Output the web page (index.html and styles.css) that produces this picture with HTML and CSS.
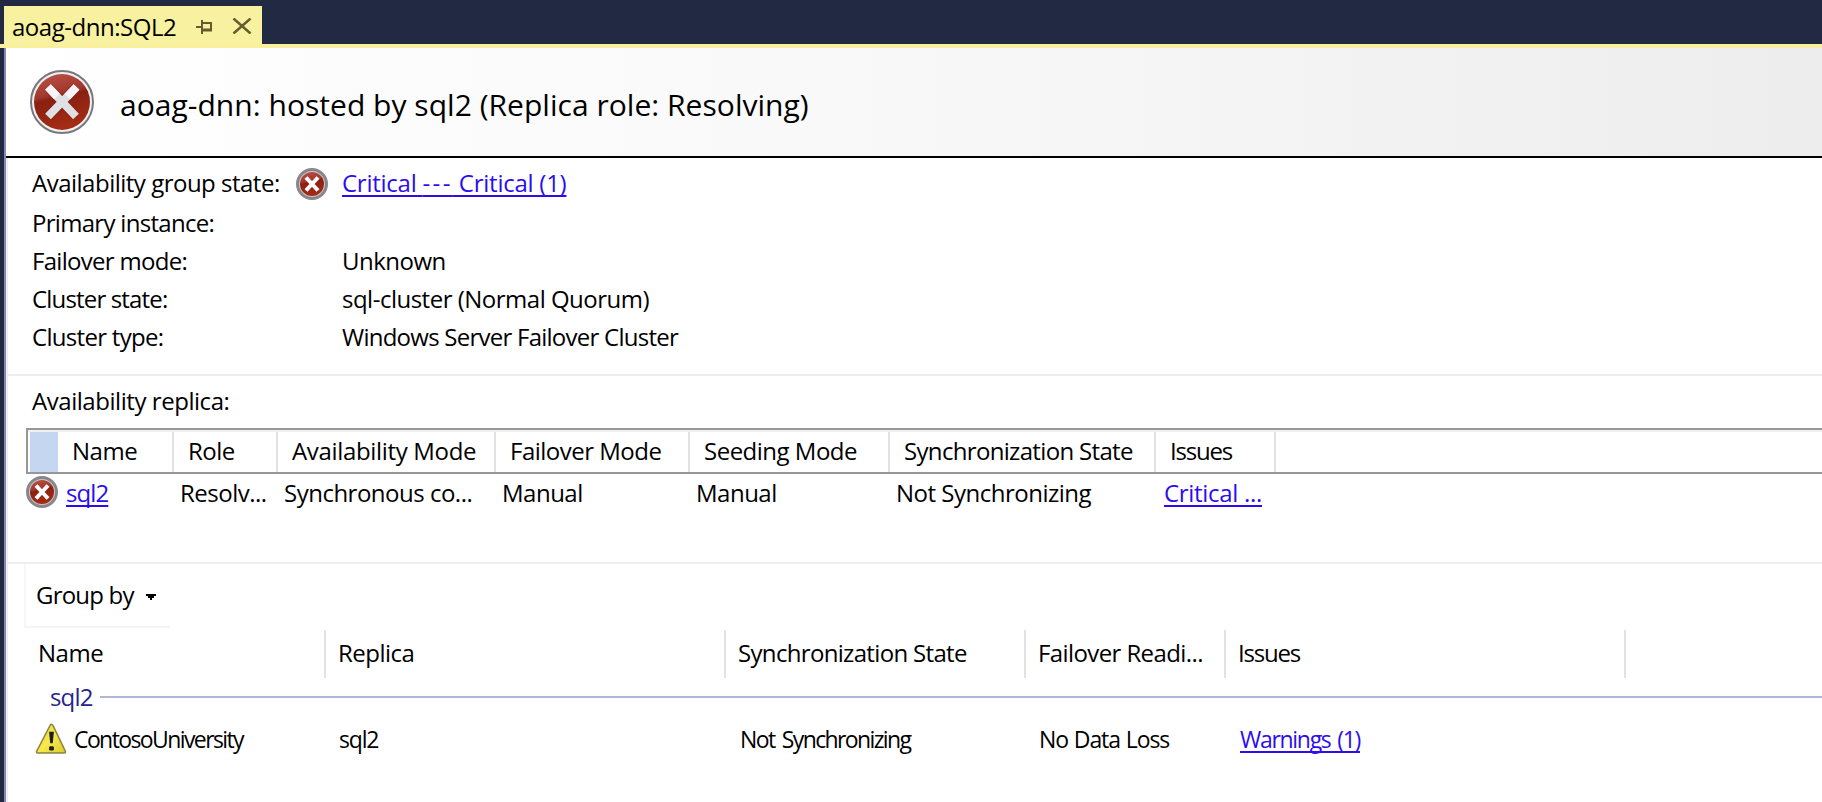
FILE: index.html
```html
<!DOCTYPE html>
<html lang="en">
<head>
<meta charset="utf-8">
<title>aoag-dnn:SQL2</title>
<link rel="stylesheet" href="styles.css">
</head>
<body>
<svg class="defs" width="0" height="0" aria-hidden="true">
  <defs>
    <linearGradient id="red" x1="0" y1="0" x2="0.25" y2="1">
      <stop offset="0" stop-color="#bd5449"/><stop offset="0.42" stop-color="#a2382d"/>
      <stop offset="0.5" stop-color="#8a2012"/><stop offset="1" stop-color="#a32c14"/>
    </linearGradient>
    <linearGradient id="yellow" x1="0" y1="0" x2="1" y2="1">
      <stop offset="0" stop-color="#d8cd3c"/><stop offset="0.5" stop-color="#f7ea4c"/><stop offset="1" stop-color="#dccb2c"/>
    </linearGradient>
    <symbol id="error-large" viewBox="0 0 64 64">
      <circle cx="32" cy="32" r="31" fill="#f1f1f3" stroke="#77777d" stroke-width="2"/>
      <circle cx="32" cy="32" r="28" fill="url(#red)"/>
      <path d="M18 17L46 46.500M46.500 17L18 46.500" stroke="#7a1408" stroke-opacity=".35" stroke-width="10"/>
      <path d="M18 17L46 46.500M46.500 17L18 46.500" stroke="#dfe0e4" stroke-width="8"/>
      <path d="M18 17L27 26.500M46.500 17L37.500 26.500" stroke="#f5f5f7" stroke-width="8"/>
    </symbol>
    <symbol id="error-small" viewBox="0 0 32 32">
      <circle cx="16" cy="16" r="14.500" fill="#c9c7c8" stroke="#88868a" stroke-width="3"/>
      <circle cx="16" cy="16" r="12" fill="url(#red)"/>
      <path d="M10 9.500L22 22.500M22 9.500L10 22.500" stroke="#fff" stroke-width="4"/>
    </symbol>
  </defs>
</svg>
<header class="tabbar">
  <div class="tab">
    <span class="tab-title">aoag-dnn:SQL2</span>
    <svg class="pin" viewBox="0 0 16 14"><path d="M0 7H6M6 0V14M6 3H15V10M6 10H16" fill="none" stroke="#655a32" stroke-width="2"/><path d="M6 10H16" stroke="#655a32" stroke-width="3"/></svg>
    <svg class="close" viewBox="0 0 20 16"><path d="M1.500 .5L18.500 15.500M18.500 .5L1.500 15.500" stroke="#655a32" stroke-width="2.500"/></svg>
  </div>
</header>
<main class="pane">
  <section class="banner">
    <svg class="banner-icon"><use href="#error-large"/></svg>
    <h1>aoag-dnn: hosted by sql2 (Replica role: Resolving)</h1>
  </section>
  <section class="summary">
    <div class="row first"><span class="label wide">Availability group state:</span><svg class="badge"><use href="#error-small"/></svg><a>Critical <span class="dashes">---</span> Critical (1)</a></div>
    <div class="row"><span class="label">Primary instance:</span></div>
    <div class="row"><span class="label">Failover mode:</span><span class="value">Unknown</span></div>
    <div class="row"><span class="label tight">Cluster state:</span><span class="value">sql-cluster (Normal Quorum)</span></div>
    <div class="row"><span class="label">Cluster type:</span><span class="value server">Windows Server Failover Cluster</span></div>
  </section>
  <section class="replicas">
    <h2>Availability replica:</h2>
    <div class="grid-head replica-cols">
      <span class="selector"></span><span>Name</span><span>Role</span><span class="avail">Availability Mode</span><span>Failover Mode</span><span>Seeding Mode</span><span class="sync">Synchronization State</span><span class="issues">Issues</span>
    </div>
    <div class="grid-row replica-row">
      <span class="name"><svg class="badge"><use href="#error-small"/></svg><a class="tight">sql2</a></span><span>Resolv...</span><span>Synchronous co...</span><span>Manual</span><span>Manual</span><span>Not Synchronizing</span><span><a class="dots">Critical ...</a></span>
    </div>
  </section>
  <section class="databases">
    <div class="groupby">Group by<svg class="caret" viewBox="0 0 10 6"><path d="M0 0H10V2H8V4H6V6H4V4H2V2H0Z"/></svg></div>
    <div class="db-head db-cols">
      <span>Name</span><span>Replica</span><span class="sync">Synchronization State</span><span class="readiness">Failover Readi...</span><span class="issues">Issues</span>
    </div>
    <div class="group"><span>sql2</span><i></i></div>
    <div class="db-row db-cols">
      <span class="db-name"><svg class="warn" viewBox="0 0 32 32"><path d="M15.500 1.500Q17 .8 18 2.500L31 29.500Q31.300 31 30 31H2Q.5 30.800 1.300 29Z" fill="url(#yellow)" stroke="#8b8340" stroke-width="1.500"/><path d="M14 9H19L17.800 21H15.200Z" fill="#1d1d22"/><rect x="14" y="24" width="5" height="4.500" rx="1.500" fill="#1d1d22"/></svg>ContosoUniversity</span><span class="db-host">sql2</span><span class="db-sync">Not Synchronizing</span><span class="db-loss">No Data Loss</span><span><a class="db-issue">Warnings (1)</a></span>
    </div>
  </section>
</main>
</body>
</html>
```
FILE: styles.css
```css
* { box-sizing: border-box; }
body {
  margin: 0;
  width: 1822px;
  height: 802px;
  overflow: hidden;
  display: flex;
  flex-direction: column;
  background: #222943;
  color: #000;
  font: 24px/38px "Open Sans", "Noto Sans", sans-serif;
  letter-spacing: -0.5px;
  white-space: nowrap;
}
svg { display: block; flex: none; }
.defs { position: absolute; }
a { color: #2b0df0; text-decoration: underline; text-decoration-thickness: 2px; text-underline-offset: 3px; text-decoration-skip-ink: none; }
.row a { letter-spacing: -0.25px; }
.dashes { letter-spacing: 2.4px; }
.tight { letter-spacing: -0.9px; }
.server { letter-spacing: -0.75px; }
.sync { letter-spacing: -0.67px; }
.issues { letter-spacing: -1.2px; }
.avail { letter-spacing: -0.33px; }
.dots { letter-spacing: -0.3px; }

.tabbar { height: 48px; flex: none; padding: 6px 0 0 4px; border-bottom: 4px solid #f8f09c; }
.tab { width: 258px; height: 38px; padding-left: 8px; background: #f8f19f; display: flex; }
.tab-title { width: 184px; line-height: 41px; letter-spacing: -0.47px; }
.pin { width: 16px; height: 14px; margin-top: 14px; }
.close { width: 20px; height: 16px; margin: 12px 0 0 20px; }

.pane { flex: 1; margin-left: 4px; border-left: 2px solid #858aad; background: #fff; }
.banner { height: 110px; display: flex; border-bottom: 2px solid #000; background: linear-gradient(90deg, #fff, #f8f8f8 50%, #ededed); }
.banner-icon { width: 64px; height: 64px; margin: 22px 0 0 24px; }
h1 { margin: 38px 0 0 26px; font-size: 30px; font-weight: 400; line-height: 38px; letter-spacing: 0.03px; }

.summary { height: 218px; padding: 6px 0 0 24px; border-left: 2px solid #eeeef2; border-bottom: 2px solid #eee; }
.row { display: flex; height: 38px; }
.row.first { height: 40px; }
.label { width: 310px; letter-spacing: -0.7px; }
.wide { width: 264px; letter-spacing: -0.5px; }
.label.tight { letter-spacing: -0.83px; }
.badge { width: 32px; height: 32px; }
.summary .badge { margin: 4px 14px 0 0; }

.replicas { height: 188px; border-left: 2px solid #eeeef2; border-bottom: 2px solid #eee; padding-left: 18px; }
h2 { margin: 0; padding: 6px 0 0 6px; height: 52px; font-size: 24px; font-weight: 400; letter-spacing: -0.45px; }
.grid-head { height: 46px; line-height: 36px; border: 2px solid #979797; border-right: 0; padding: 2px 0 0 2px; box-shadow: inset 0 2px #f0f0f0; display: grid; }
.replica-cols { grid-template-columns: 28px 116px 104px 218px 194px 200px 266px 120px; }
.grid-head span { border-right: 2px solid #e2e2e2; padding: 1px 0 0 14px; }
.grid-head .selector { background: #c4d6f0; border: 0; }
.grid-row { display: grid; grid-template-columns: 154px 104px 218px 194px 200px 268px auto; line-height: 38px; }
.name { display: flex; }
.name .badge { margin: 2px 8px 0 0; }

.databases { height: 238px; border-left: 2px solid #eeeef2; padding-left: 16px; }
.groupby { width: 146px; height: 64px; padding: 12px 0 0 10px; border-left: 2px solid #f7f7fb; border-bottom: 2px solid #f3f3fa; display: flex; letter-spacing: -0.8px; }
.caret { width: 10px; height: 6px; margin: 18px 0 0 12px; }
.db-cols { display: grid; grid-template-columns: 302px 400px 300px 200px 400px; }
.db-head { height: 50px; padding-top: 2px; line-height: 45px; }
.db-head span { border-right: 2px solid #e2e2e2; padding-left: 12px; }
.db-head span:first-child { padding-left: 14px; }
.readiness { letter-spacing: -0.6px; }
.group { display: flex; height: 38px; padding-left: 26px; line-height: 37px; color: #25258c; letter-spacing: -0.85px; }
.group span { width: 50px; }
.group i { flex: 1; height: 2px; margin-top: 18px; background: #afb8dc; }
.db-row { font-size: 23px; height: 44px; line-height: 46px; }
.db-row > span { padding-left: 13px; }
.db-row .db-name { display: flex; padding-left: 11px; letter-spacing: -1.6px; }
.warn { width: 32px; height: 31px; margin: 7px 7px 0 0; }
.db-host { letter-spacing: -1.2px; }
.db-row .db-sync { letter-spacing: -1.63px; word-spacing: 3px; padding-left: 14px; }
.db-loss { letter-spacing: -1.1px; word-spacing: 1px; }
.db-issue { letter-spacing: -1.3px; word-spacing: 2px; margin-left: 1px; }
```
